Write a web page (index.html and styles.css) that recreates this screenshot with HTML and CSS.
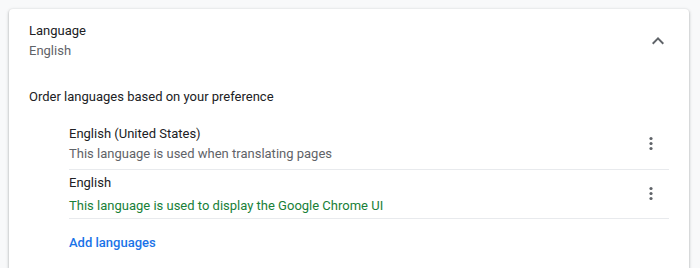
FILE: index.html
```html
<!DOCTYPE html>
<html lang="en">
<head>
    <meta charset="UTF-8">
    <title>Languages</title>
    <link rel="stylesheet" href="styles.css">
</head>
<body>
    <div class="card">
        <div class="header">
            <div class="header-text">
                <div class="title">Language</div>
                <div class="secondary">English</div>
            </div>
            <button class="icon-button chevron" aria-label="Collapse">
                <svg width="24" height="24" viewBox="0 0 24 24">
                    <path d="M7.4 15.4L12 10.8l4.6 4.6L18 14l-6-6-6 6z" fill="#5f6368"/>
                </svg>
            </button>
        </div>

        <div class="section-label">Order languages based on your preference</div>

        <div class="language-list">
            <div class="row">
                <div class="row-text">
                    <div class="title">English (United States)</div>
                    <div class="secondary">This language is used when translating pages</div>
                </div>
                <button class="icon-button" aria-label="More actions">
                    <svg width="24" height="24" viewBox="0 0 24 24">
                        <circle cx="12" cy="6.5" r="1.6" fill="#5f6368"/>
                        <circle cx="12" cy="11.5" r="1.6" fill="#5f6368"/>
                        <circle cx="12" cy="16.5" r="1.6" fill="#5f6368"/>
                    </svg>
                </button>
            </div>
            <div class="row">
                <div class="row-text">
                    <div class="title">English</div>
                    <div class="ui-note">This language is used to display the Google Chrome UI</div>
                </div>
                <button class="icon-button" aria-label="More actions">
                    <svg width="24" height="24" viewBox="0 0 24 24">
                        <circle cx="12" cy="6.5" r="1.6" fill="#5f6368"/>
                        <circle cx="12" cy="11.5" r="1.6" fill="#5f6368"/>
                        <circle cx="12" cy="16.5" r="1.6" fill="#5f6368"/>
                    </svg>
                </button>
            </div>
            <a class="add-link" href="#">Add languages</a>
        </div>
    </div>
</body>
</html>
```

FILE: styles.css
```css
/* Reset */
body, div, a, button {
    margin: 0;
    padding: 0;
    font-family: Roboto, "Liberation Sans", Arial, sans-serif;
}

body {
    background-color: #f8f9fa;
    padding: 9px 11px 0 9px;
    height: 100vh;
    box-sizing: border-box;
    overflow: hidden;
    font-size: 13px;
    line-height: 20px;
    color: #202124;
}

/* Card (open at the bottom, it continues below the fold) */
.card {
    background-color: #ffffff;
    border-radius: 4px 4px 0 0;
    box-shadow: 0 1px 2px rgba(60, 64, 67, 0.3), 0 1px 3px 1px rgba(60, 64, 67, 0.15);
    height: 100%;
    padding: 0 20px;
}

/* Header */
.header {
    display: flex;
    align-items: center;
    justify-content: space-between;
    min-height: 64px;
}

.title {
    color: #202124;
}

.secondary {
    color: #5f6368;
}

.icon-button {
    background: none;
    border: none;
    display: flex;
    align-items: center;
    justify-content: center;
    width: 36px;
    height: 36px;
}

.chevron {
    width: 24px;
    height: 24px;
    margin-right: -1px;
}

/* Languages */
.section-label {
    margin-top: 14px;
}

.language-list {
    margin: 12px 0 0 40px;
    display: flex;
    flex-direction: column;
}

.row {
    display: flex;
    align-items: center;
    justify-content: space-between;
    min-height: 48px;
    border-bottom: 1px solid #e8eaed;
}

.row:first-child {
    min-height: 50px;
}

.ui-note {
    color: #188038;
    margin-top: 3px;
}

.add-link {
    align-self: flex-start;
    margin-top: 14px;
    color: #1a73e8;
    font-weight: 500;
    text-decoration: none;
}
```
